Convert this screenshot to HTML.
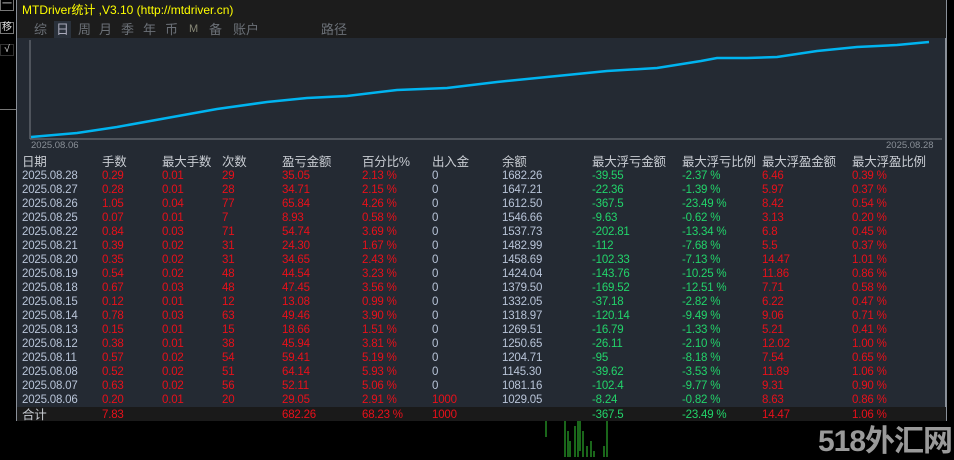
<!DOCTYPE html>
<html><head><meta charset="utf-8"><style>
*{margin:0;padding:0;box-sizing:border-box}
body{width:954px;height:457px;background:#000;position:relative;overflow:hidden;font-family:"Liberation Sans","Noto Sans CJK SC",sans-serif}
.panel{position:absolute;left:16px;top:0;width:931px;height:421px;background:#242a33;border-left:1px solid #8a9099;border-right:2px solid #8a9099;border-bottom:1px solid #8a9099}
.hdr{position:absolute;left:0;top:0;width:929px;height:38px;background:#1c1c1c}
.title{position:absolute;left:5px;top:1px;color:#ffff00;font-size:12px}
.tabs{position:absolute;left:0;top:21px;font-size:13px;color:#6b7077;line-height:17px}
.tabs span{position:absolute;top:0;white-space:nowrap}
.t{position:absolute;font-size:11.5px;white-space:nowrap;letter-spacing:-0.2px;line-height:14px}
.h{color:#c8ccd2;font-size:12.5px}
.d{color:#b8c4d8}.r{color:#e8101a}.g{color:#22d46a}.w{color:#c8ccd2}
.lb{position:absolute;left:0;width:14px;height:12px;border:1px solid #777;color:#ddd;font-size:10px;line-height:10px;text-align:center}
</style></head><body>
<div class="lb" style="top:-1px">一</div>
<div class="lb" style="top:22px">移</div>
<div class="lb" style="top:44px;border-color:#333">√</div>
<div style="position:absolute;left:0;top:109px;width:16px;height:1px;background:#777"></div>
<div class="panel">
<div class="hdr">
<div class="title">MTDriver统计 ,V3.10 (http://mtdriver.cn)</div>
<div class="tabs">
<span style="left:17px">综</span>
<span style="left:37px;background:#2a313b;color:#aab;padding:0 2px">日</span>
<span style="left:61px">周</span><span style="left:82px">月</span><span style="left:104px">季</span><span style="left:126px">年</span><span style="left:148px">币</span>
<span style="left:172px;font-size:11px;color:#887">M</span><span style="left:192px">备</span><span style="left:216px">账户</span><span style="left:304px">路径</span>
</div>
</div>
<svg style="position:absolute;left:0;top:38px" width="929" height="110">
<line x1="13" y1="2" x2="13" y2="101" stroke="#7a7f86"/>
<line x1="13" y1="101" x2="925" y2="101" stroke="#7a7f86"/>
<polyline fill="none" stroke="#00b4f0" stroke-width="2.5" points="14,99 60,95 100,89 150,80 200,71 250,64 290,60 330,58 380,52 430,50 480,44 540,38 590,33 640,30 684,23 700,20 730,20 760,19 780,16 800,13 840,9 880,7 912,4"/>
<text x="14" y="110" fill="#8a9098" font-size="9.5" font-family="Liberation Sans">2025.08.06</text>
<text x="869" y="110" fill="#8a9098" font-size="9.5" font-family="Liberation Sans">2025.08.28</text>
</svg>
<div style="position:absolute;left:0;top:407px;width:929px;height:14px;background:#1a1a1a"></div>
<div id="tb"></div>
</div>
<div style="position:absolute;left:818px;top:416px;color:#9a9a9a;font-size:30px;font-weight:bold;letter-spacing:-1px">518外汇网</div>
<svg style="position:absolute;left:530px;top:421px" width="120" height="36">
<g stroke="#3c3" stroke-width="1">
<line x1="16" y1="0" x2="16" y2="16"/><line x1="35" y1="0" x2="35" y2="36"/><line x1="38" y1="10" x2="38" y2="36"/><line x1="40" y1="20" x2="40" y2="36"/><line x1="45" y1="5" x2="45" y2="36"/><line x1="48" y1="0" x2="48" y2="36"/><line x1="50" y1="0" x2="50" y2="30"/><line x1="53" y1="10" x2="53" y2="36"/><line x1="57" y1="25" x2="57" y2="36"/><line x1="61" y1="20" x2="61" y2="36"/><line x1="64" y1="30" x2="64" y2="36"/><line x1="74" y1="25" x2="74" y2="36"/><line x1="77" y1="0" x2="77" y2="36"/>
</g></svg>
<script>
var cols=[5,85,145,205,265,345,415,485,575,665,745,835];
var H=["日期","手数","最大手数","次数","盈亏金额","百分比%","出入金","余额","最大浮亏金额","最大浮亏比例","最大浮盈金额","最大浮盈比例"];
var R=[
["2025.08.28","0.29","0.01","29","35.05","2.13 %","0","1682.26","-39.55","-2.37 %","6.46","0.39 %"],
["2025.08.27","0.28","0.01","28","34.71","2.15 %","0","1647.21","-22.36","-1.39 %","5.97","0.37 %"],
["2025.08.26","1.05","0.04","77","65.84","4.26 %","0","1612.50","-367.5","-23.49 %","8.42","0.54 %"],
["2025.08.25","0.07","0.01","7","8.93","0.58 %","0","1546.66","-9.63","-0.62 %","3.13","0.20 %"],
["2025.08.22","0.84","0.03","71","54.74","3.69 %","0","1537.73","-202.81","-13.34 %","6.8","0.45 %"],
["2025.08.21","0.39","0.02","31","24.30","1.67 %","0","1482.99","-112","-7.68 %","5.5","0.37 %"],
["2025.08.20","0.35","0.02","31","34.65","2.43 %","0","1458.69","-102.33","-7.13 %","14.47","1.01 %"],
["2025.08.19","0.54","0.02","48","44.54","3.23 %","0","1424.04","-143.76","-10.25 %","11.86","0.86 %"],
["2025.08.18","0.67","0.03","48","47.45","3.56 %","0","1379.50","-169.52","-12.51 %","7.71","0.58 %"],
["2025.08.15","0.12","0.01","12","13.08","0.99 %","0","1332.05","-37.18","-2.82 %","6.22","0.47 %"],
["2025.08.14","0.78","0.03","63","49.46","3.90 %","0","1318.97","-120.14","-9.49 %","9.06","0.71 %"],
["2025.08.13","0.15","0.01","15","18.66","1.51 %","0","1269.51","-16.79","-1.33 %","5.21","0.41 %"],
["2025.08.12","0.38","0.01","38","45.94","3.81 %","0","1250.65","-26.11","-2.10 %","12.02","1.00 %"],
["2025.08.11","0.57","0.02","54","59.41","5.19 %","0","1204.71","-95","-8.18 %","7.54","0.65 %"],
["2025.08.08","0.52","0.02","51","64.14","5.93 %","0","1145.30","-39.62","-3.53 %","11.89","1.06 %"],
["2025.08.07","0.63","0.02","56","52.11","5.06 %","0","1081.16","-102.4","-9.77 %","9.31","0.90 %"],
["2025.08.06","0.20","0.01","20","29.05","2.91 %","1000","1029.05","-8.24","-0.82 %","8.63","0.86 %"],
["合计","7.83","","","682.26","68.23 %","1000","","-367.5","-23.49 %","14.47","1.06 %"]];
var s="";
H.forEach(function(h,i){s+='<div class="t h" style="left:'+cols[i]+'px;top:155px">'+h+'</div>'});
R.forEach(function(r,j){var y=169+j*14+(j==R.length-1?1:0);var last=j==R.length-1;
r.forEach(function(v,i){var c=i==0?(last?"w":"d"):(i==7||(i==6&&v=="0"))?"d":(i==8||i==9)?"g":"r";
if(i==0&&last){s+='<div class="t w" style="left:'+cols[i]+'px;top:'+y+'px;font-size:12.5px">'+v+'</div>';return;}
s+='<div class="t '+c+'" style="left:'+cols[i]+'px;top:'+y+'px">'+v+'</div>'})});
document.getElementById("tb").innerHTML=s;
</script>
</body></html>
